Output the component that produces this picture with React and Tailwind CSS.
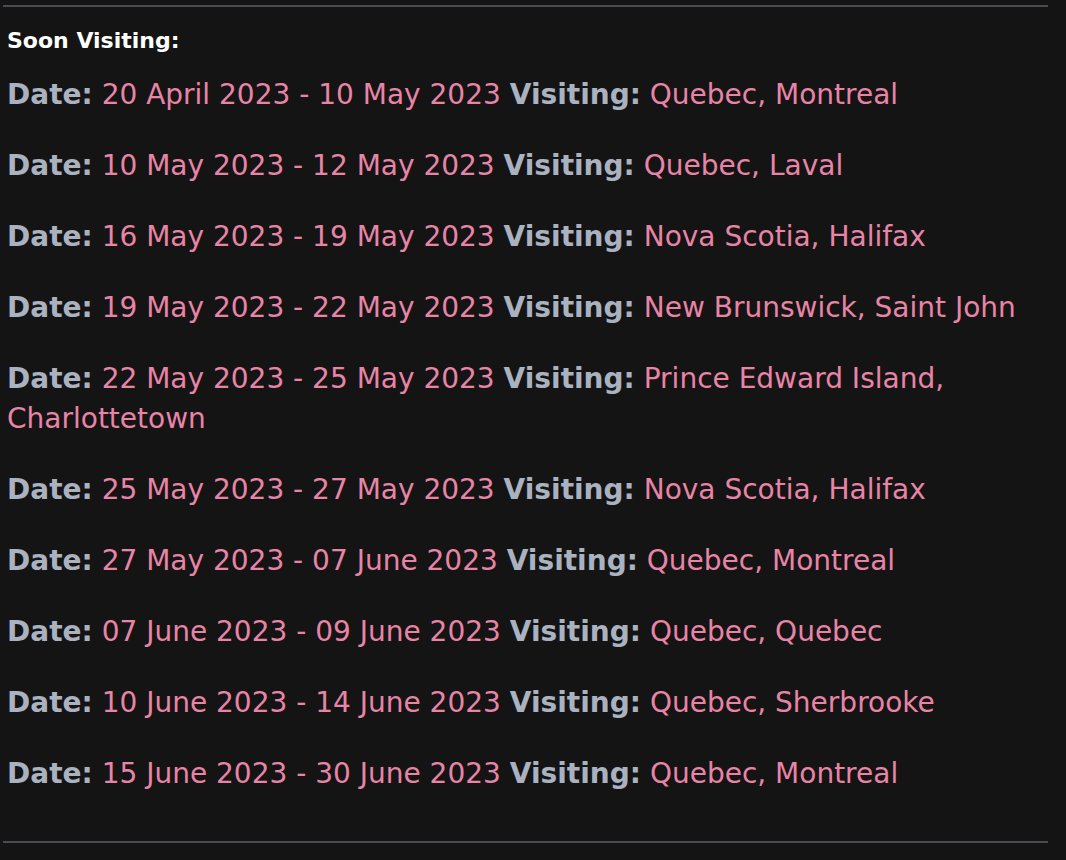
const visits = [
  { from: "20 April 2023", to: "10 May 2023", place: "Quebec, Montreal" },
  { from: "10 May 2023", to: "12 May 2023", place: "Quebec, Laval" },
  { from: "16 May 2023", to: "19 May 2023", place: "Nova Scotia, Halifax" },
  { from: "19 May 2023", to: "22 May 2023", place: "New Brunswick, Saint John" },
  { from: "22 May 2023", to: "25 May 2023", place: "Prince Edward Island, Charlottetown" },
  { from: "25 May 2023", to: "27 May 2023", place: "Nova Scotia, Halifax" },
  { from: "27 May 2023", to: "07 June 2023", place: "Quebec, Montreal" },
  { from: "07 June 2023", to: "09 June 2023", place: "Quebec, Quebec" },
  { from: "10 June 2023", to: "14 June 2023", place: "Quebec, Sherbrooke" },
  { from: "15 June 2023", to: "30 June 2023", place: "Quebec, Montreal" },
];

export default function App() {
  return (
    <div
      className="min-h-[860px] bg-[#141414] pt-[5px]"
      style={{ fontFamily: '"DejaVu Sans", "Noto Sans", sans-serif' }}
    >
      <div className="ml-[3px] w-[1045px]">
        <hr className="border-t-2 border-[#4a4b50]" />
        <h3 className="mt-[20px] pl-[4px] text-[22px] leading-[28px] font-bold text-white">Soon Visiting:</h3>
        <div className="mt-[20px] flex flex-col gap-[31px] pl-[4px]">
          {visits.map((v, i) => (
            <p key={i} className="text-[28px] leading-[40px] text-[#e884a6]">
              <span className="font-bold text-[#aab2c0]">Date:</span> {v.from} - {v.to}{" "}
              <span className="font-bold text-[#aab2c0]">Visiting:</span> {v.place}
            </p>
          ))}
        </div>
        <hr className="mt-[47px] border-t-2 border-[#4a4b50]" />
      </div>
    </div>
  );
}
